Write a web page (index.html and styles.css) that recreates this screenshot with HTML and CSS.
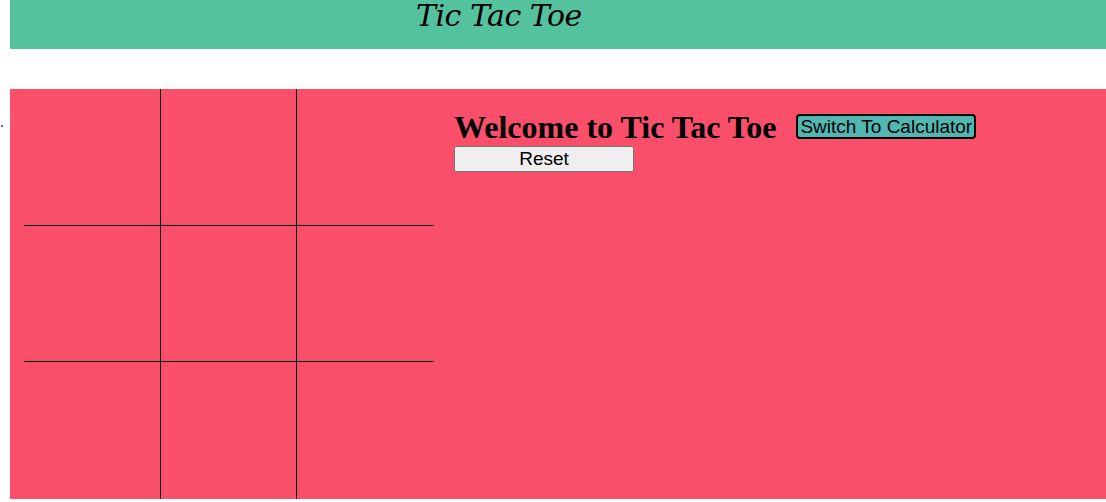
FILE: index.html
```html
<!DOCTYPE html>
<html>
<head>
<meta charset="utf-8">
<link rel="stylesheet" href="styles.css">
</head>
<body>
<header class="topbar">
  <div class="title">Tic Tac Toe</div>
</header>
<span class="dot"></span>
<main class="stage">
  <div class="board">
    <div class="cell"></div><div class="cell"></div><div class="cell last"></div>
    <div class="cell"></div><div class="cell"></div><div class="cell last"></div>
    <div class="cell row3"></div><div class="cell row3"></div><div class="cell last row3"></div>
  </div>
  <section class="panel">
    <div class="heading-row">
      <h1 class="welcome">Welcome to Tic Tac Toe</h1>
      <button class="switch">Switch To Calculator</button>
    </div>
    <button class="reset">Reset</button>
  </section>
</main>
</body>
</html>
```
FILE: styles.css
```css
html, body {
  margin: 0;
  padding: 0;
  background: #ffffff;
  overflow: hidden;
}
body {
  width: 1106px;
  height: 502px;
  position: relative;
}
.topbar {
  margin-left: 10px;
  height: 49px;
  background: #54c19f;
  display: flex;
  align-items: flex-start;
}
.title {
  margin-left: 406px;
  margin-top: -2px;
  font-family: "DejaVu Serif", serif;
  font-style: italic;
  font-size: 30px;
  line-height: 36px;
  color: #000;
  letter-spacing: -0.5px;
}
.dot {
  position: absolute;
  left: 1px;
  top: 125px;
  width: 2px;
  height: 2px;
  background: #5a5af0;
}
.stage {
  margin-top: 40px;
  margin-left: 10px;
  height: 410px;
  background: #f94f6a;
  display: flex;
  align-items: flex-start;
}
.board {
  margin-left: 14px;
  display: grid;
  grid-template-columns: 137px 136px 137px;
  grid-template-rows: 137px 136px 137px;
}
.cell {
  box-sizing: border-box;
  border-right: 1px solid #000;
  border-bottom: 1px solid #000;
}
.cell.last {
  border-right: none;
}
.cell.row3 {
  border-bottom: none;
}
.panel {
  margin-left: 20px;
  padding-top: 20px;
  display: flex;
  flex-direction: column;
  align-items: flex-start;
}
.heading-row {
  display: flex;
  align-items: center;
}
.welcome {
  margin: 0;
  font-family: "Liberation Serif", serif;
  font-weight: bold;
  font-size: 32px;
  line-height: 37px;
  color: #000;
}
.switch {
  margin-left: 20px;
  margin-top: -2px;
  font-family: "Liberation Sans", Arial, sans-serif;
  font-size: 19px;
  line-height: 21px;
  padding: 0 2px;
  background: #52b6b2;
  color: #000;
  border: 2px solid #000;
  border-radius: 4px;
}
.reset {
  width: 180px;
  height: 26px;
  font-family: "Liberation Sans", Arial, sans-serif;
  font-size: 19px;
  line-height: 20px;
  padding: 0;
  background: #efefef;
  color: #000;
  border: 1px solid #767676;
  border-radius: 2px;
}
```
